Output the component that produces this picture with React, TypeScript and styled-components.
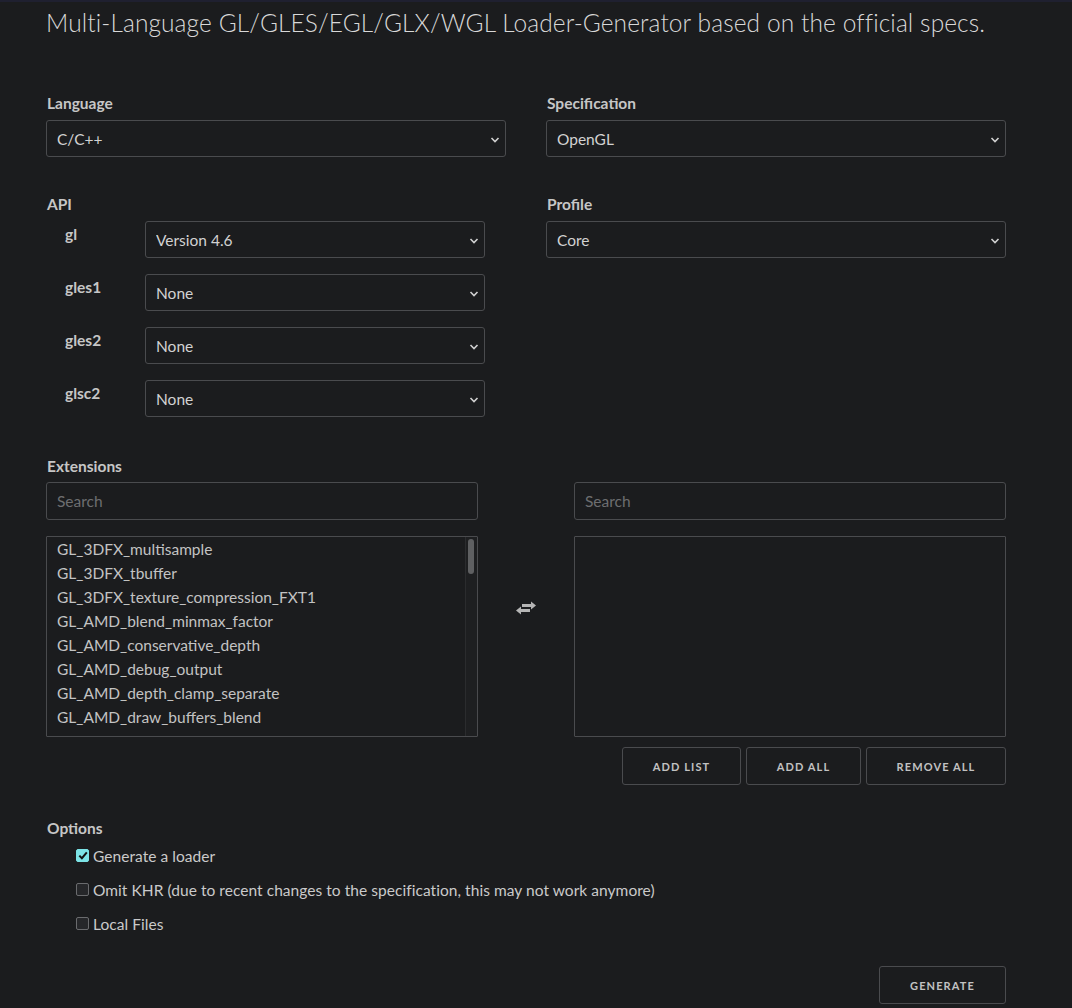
import React from "react";
import styled, { createGlobalStyle } from "styled-components";

const Global = createGlobalStyle`
  html, body { margin: 0; padding: 0; background: #1b1c1e; }
  body {
    font-family: Lato, "Open Sans", sans-serif;
    color: #c9c9c9;
    border-top: 2px solid #1f2030;
  }
  * { box-sizing: border-box; }
`;

const Page = styled.div`
  width: 960px;
  margin-left: 46px;
  padding-bottom: 40px;
`;

const Title = styled.h1`
  margin: 0;
  padding-top: 6px;
  font-size: 24.5px;
  font-weight: 300;
  color: #d8d8d8;
  line-height: 30px;
  letter-spacing: 0.1px;
`;

const TwoCols = styled.div<{ $top: number }>`
  display: grid;
  grid-template-columns: 460px 460px;
  column-gap: 40px;
  align-items: start;
  margin-top: ${(p) => p.$top}px;
`;

const Col = styled.div`
  display: flex;
  flex-direction: column;
  align-items: stretch;
`;

const Label = styled.div<{ $gap?: number }>`
  font-size: 15.5px;
  font-weight: 700;
  color: #c6c6c6;
  line-height: 18px;
  height: 18px;
  padding-top: 1px;
  margin-bottom: ${(p) => (p.$gap ?? 9)}px;
  padding-left: 1px;
`;

const SelectWrap = styled.div`
  position: relative;
  width: 100%;
  height: 37px;
`;

const Select = styled.select`
  appearance: none;
  -webkit-appearance: none;
  width: 100%;
  height: 100%;
  background: #1b1c1e;
  color: #d2d2d2;
  border: 1px solid #4a4b4e;
  border-radius: 3px;
  font-family: Lato, sans-serif;
  font-size: 15.5px;
  padding: 0 30px 0 10px;
  outline: none;
`;

const Chevron = styled.svg`
  position: absolute;
  right: 6px;
  top: 50%;
  width: 10px;
  height: 10px;
  margin-top: -4px;
  pointer-events: none;
`;

function Dropdown({ value }: { value: string }) {
  return (
    <SelectWrap>
      <Select defaultValue={value}>
        <option>{value}</option>
      </Select>
      <Chevron viewBox="0 0 10 10">
        <path d="M1.5 3 L5 6.5 L8.5 3" fill="none" stroke="#d0d0d0" strokeWidth="1.6" />
      </Chevron>
    </SelectWrap>
  );
}

const ApiRows = styled.div`
  display: flex;
  flex-direction: column;
  gap: 16px;
`;

const ApiRow = styled.div`
  display: grid;
  grid-template-columns: 80px 340px;
  padding-left: 19px;
`;

const ApiName = styled.div`
  font-size: 15.5px;
  font-weight: 700;
  color: #c6c6c6;
  line-height: 18px;
  padding-top: 4px;
`;

const ExtSection = styled.div`
  margin-top: 39px;
`;

const ExtGrid = styled.div`
  display: grid;
  grid-template-columns: 432px 96px 432px;
  row-gap: 16px;
`;

const SearchInput = styled.input`
  width: 100%;
  height: 38px;
  background: #1b1c1e;
  border: 1px solid #4a4b4e;
  border-radius: 3px;
  color: #ccc;
  font-family: Lato, sans-serif;
  font-size: 15.5px;
  padding: 0 10px;
  outline: none;
  &::placeholder { color: #6d6e70; }
`;

const ListBox = styled.div`
  height: 201px;
  border: 1px solid #4a4b4e;
  border-radius: 1px;
  display: flex;
  overflow: hidden;
`;

const ListItems = styled.div`
  flex: 1;
  overflow: hidden;
`;

const Track = styled.div`
  width: 12px;
  flex: none;
  background: #1e1f21;
  border-left: 1px solid #2b2c2e;
  padding: 2px 0 0 2px;
`;

const Thumb = styled.div`
  width: 6px;
  height: 35px;
  border-radius: 3px;
  background: #5f6062;
`;

const EmptyBox = styled.div`
  height: 201px;
  border: 1px solid #4a4b4e;
  border-radius: 1px;
`;

const ListItem = styled.div`
  font-size: 15.5px;
  color: #c3c3c3;
  line-height: 24px;
  padding-left: 10px;
  white-space: nowrap;
`;

const SwapCell = styled.div`
  display: flex;
  justify-content: center;
  padding-top: 65px;
`;

const ButtonRow = styled.div`
  grid-column: 3;
  display: flex;
  justify-content: flex-end;
  gap: 5px;
  margin-top: -6px;
`;

const Button = styled.button<{ $w: number }>`
  width: ${(p) => p.$w}px;
  height: 38px;
  background: transparent;
  border: 1px solid #4a4b4e;
  border-radius: 3px;
  color: #c2c2c2;
  font-family: Lato, sans-serif;
  font-size: 11px;
  font-weight: 700;
  letter-spacing: 1.1px;
  text-transform: uppercase;
  padding: 0;
`;

const OptionsSection = styled.div`
  margin-top: 33px;
`;

const OptionList = styled.div`
  display: flex;
  flex-direction: column;
  gap: 14px;
  padding-left: 30px;
  padding-top: 1px;
`;

const OptionRow = styled.label`
  display: flex;
  align-items: center;
  gap: 4px;
  font-size: 15.5px;
  letter-spacing: 0.05px;
  color: #cacaca;
  line-height: 20px;
  height: 20px;
`;

const Box = styled.span<{ $on?: boolean }>`
  width: 13px;
  height: 13px;
  border-radius: 2px;
  background: ${(p) => (p.$on ? "#7ce3e6" : "#26272a")};
  border: 1px solid ${(p) => (p.$on ? "#7ce3e6" : "#6a6b6e")};
  display: inline-flex;
  align-items: center;
  justify-content: center;
  flex: none;
  margin-top: -1px;
`;

const Footer = styled.div`
  display: flex;
  justify-content: flex-end;
  margin-top: 32px;
`;

const exts = [
  "GL_3DFX_multisample",
  "GL_3DFX_tbuffer",
  "GL_3DFX_texture_compression_FXT1",
  "GL_AMD_blend_minmax_factor",
  "GL_AMD_conservative_depth",
  "GL_AMD_debug_output",
  "GL_AMD_depth_clamp_separate",
  "GL_AMD_draw_buffers_blend",
  "GL_AMD_framebuffer_multisample_advanced",
];

function Check({ on, children }: { on?: boolean; children: React.ReactNode }) {
  return (
    <OptionRow>
      <Box $on={on}>
        {on && (
          <svg width="10" height="9" viewBox="0 0 10 9">
            <path d="M1.3 4.6 L3.9 7.2 L8.8 1.4" fill="none" stroke="#111" strokeWidth="2" />
          </svg>
        )}
      </Box>
      {children}
    </OptionRow>
  );
}

export default function App() {
  return (
    <>
      <Global />
      <Page>
        <Title>Multi-Language GL/GLES/EGL/GLX/WGL Loader-Generator based on the official specs.</Title>

        <TwoCols $top={55}>
          <Col>
            <Label>Language</Label>
            <Dropdown value="C/C++" />
          </Col>
          <Col>
            <Label>Specification</Label>
            <Dropdown value="OpenGL" />
          </Col>
        </TwoCols>

        <TwoCols $top={37}>
          <Col>
            <Label>API</Label>
            <ApiRows>
              {[
                ["gl", "Version 4.6"],
                ["gles1", "None"],
                ["gles2", "None"],
                ["glsc2", "None"],
              ].map(([n, v]) => (
                <ApiRow key={n}>
                  <ApiName>{n}</ApiName>
                  <Dropdown value={v} />
                </ApiRow>
              ))}
            </ApiRows>
          </Col>
          <Col>
            <Label>Profile</Label>
            <Dropdown value="Core" />
          </Col>
        </TwoCols>

        <ExtSection>
          <Label $gap={8}>Extensions</Label>
          <ExtGrid>
            <SearchInput placeholder="Search" />
            <div />
            <SearchInput placeholder="Search" />
            <ListBox>
              <ListItems>
                {exts.map((e) => (
                  <ListItem key={e}>{e}</ListItem>
                ))}
              </ListItems>
              <Track>
                <Thumb />
              </Track>
            </ListBox>
            <SwapCell>
              <svg width="22" height="14" viewBox="0 0 22 14">
                <path d="M7 3 H16 V0.5 L21 4.5 L16 8.5 V6 H7 Z" fill="#b5b5b5" />
                <path d="M15 8 H6 V5.5 L1 9.5 L6 13.5 V11 H15 Z" fill="#b5b5b5" />
              </svg>
            </SwapCell>
            <EmptyBox />
            <ButtonRow>
              <Button $w={119}>Add List</Button>
              <Button $w={115}>Add All</Button>
              <Button $w={140}>Remove All</Button>
            </ButtonRow>
          </ExtGrid>
        </ExtSection>

        <OptionsSection>
          <Label>Options</Label>
          <OptionList>
            <Check on>Generate a loader</Check>
            <Check>Omit KHR (due to recent changes to the specification, this may not work anymore)</Check>
            <Check>Local Files</Check>
          </OptionList>
        </OptionsSection>

        <Footer>
          <Button $w={127}>Generate</Button>
        </Footer>
      </Page>
    </>
  );
}
